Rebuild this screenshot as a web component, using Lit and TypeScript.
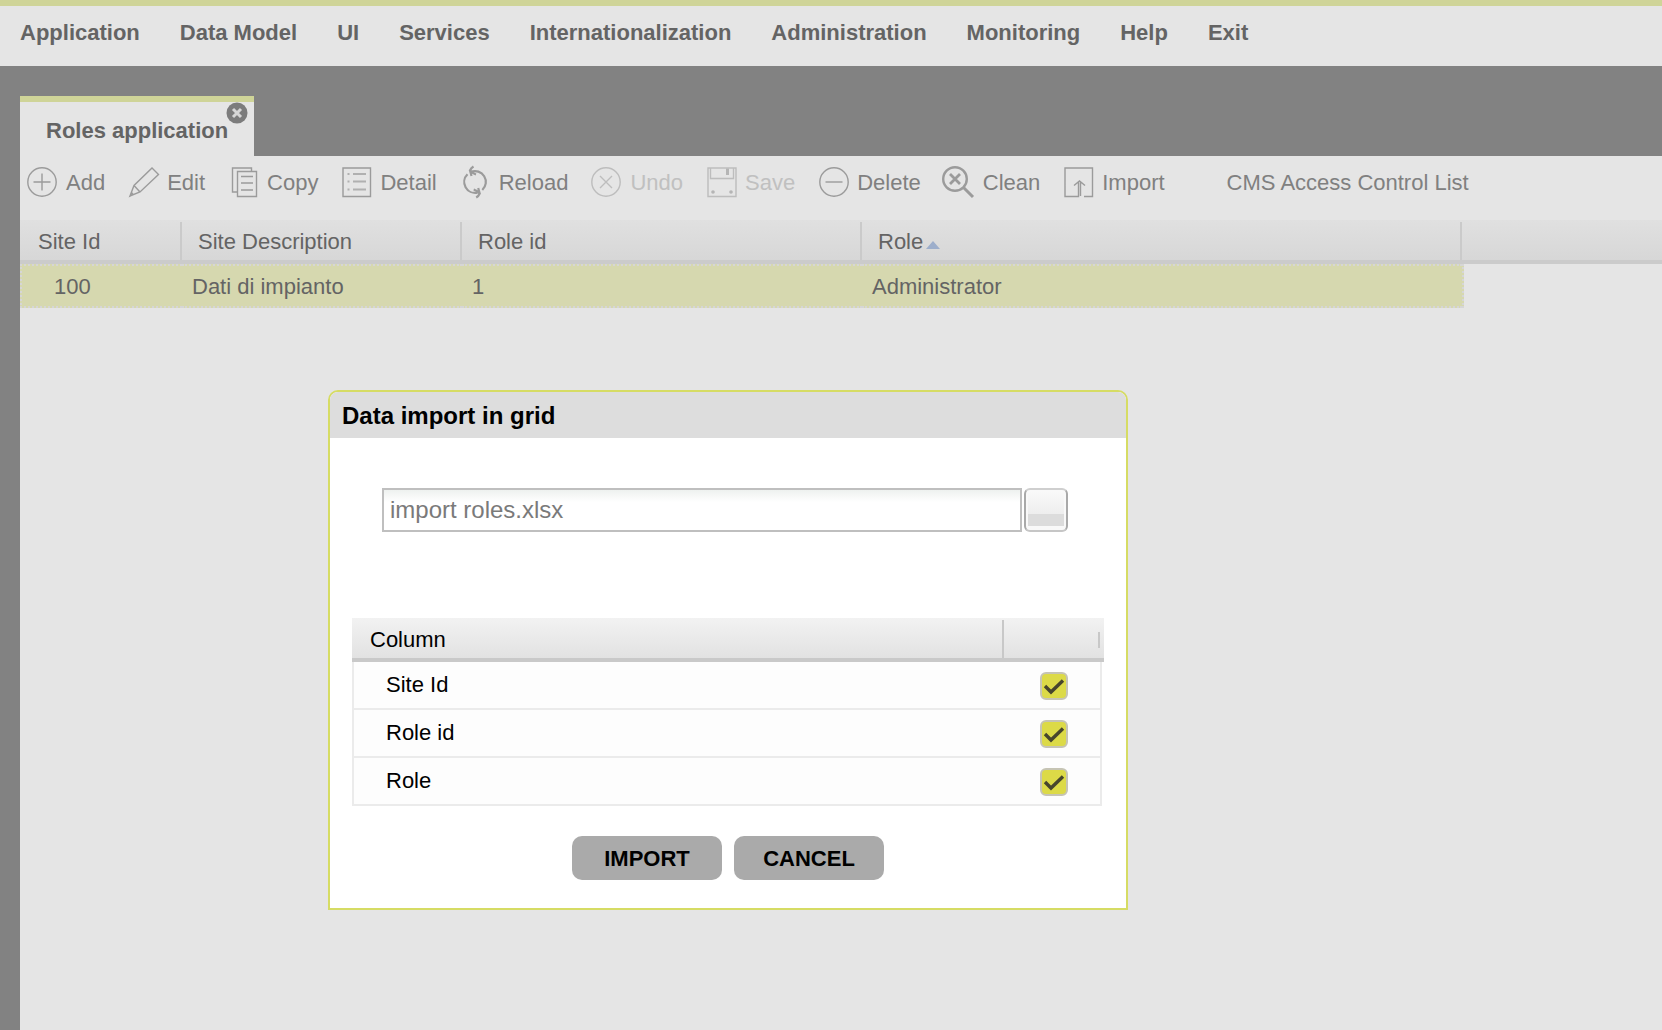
import { LitElement, html, css, svg, nothing } from "lit";
import { customElement, property } from "lit/decorators.js";

const icons: Record<string, unknown> = {
  Add: svg`<circle cx="15" cy="16" r="14.2"/><path d="M15 7.5v17M6.5 16h17"/>`,
  Edit: svg`<path d="M2 30l4-10.5L24 2l6.5 6.5L12 26zM6 19.5l6 6.5M2 30l3-1.5-1.5-2z"/>`,
  Copy: svg`<path d="M9.500 26H4.500V2H23.500v3.500M9.500 5.500h19v25h-19z"/><path d="M13 10.500h12M13 17h12M13 24h12"/>`,
  Detail: svg`<path d="M2 2h27.500v28.500H2z"/><path stroke="#b0b0b0" stroke-width="1.800" d="M12 8h13M12 15.500h13M12 23.500h13M6.500 8h2M6.500 15.500h2M6.500 23.500h2"/>`,
  Reload: svg`<g stroke-width="2.200"><path d="M7.500 8.200A10.900 10.900 0 0 0 17.500 26.600M22.300 24A10.900 10.900 0 0 0 11 5.800"/><path d="M13.500 .5Q11 2 10 4.500Q13 7.500 16 8.500M10 4.500l1.500 5.500M16.200 31.500Q18.700 30 19.700 27.500Q16.700 24.500 13.700 23.500M19.700 27.500l-1.500-5.500"/></g>`,
  Undo: svg`<circle cx="15" cy="16" r="14.2"/><path d="M9 10l12 12M21 10L9 22"/>`,
  Save: svg`<path d="M2 2h28v28.500H2zM4.500 2v10.500h23V2"/><path class="solid" d="M20 2.500h3v6.500h-3z"/><circle class="solid" cx="7" cy="26" r="1.800"/><circle class="solid" cx="25" cy="26" r="1.800"/>`,
  Delete: svg`<circle cx="16" cy="16" r="14.2"/><path d="M7.500 16h17"/>`,
  Clean: svg`<g stroke-width="2.400"><circle cx="11" cy="13" r="11.800"/><path stroke-width="2.800" d="M6 8l10 10M16 8L6 18"/><path stroke-width="3" d="M19.500 21.500l9.500 9.500"/></g>`,
  Import: svg`<path d="M21 30.500h8.500V2H2v28.500h13.500V16M17.500 30V16M11 19.500L16.500 15l5.500 4.500"/>`,
};

@customElement("tool-button")
class ToolButton extends LitElement {
  @property() label = "";
  @property({ type: Boolean }) disabled = false;

  static styles = css`
    :host { display: block; }
    button {
      display: flex; align-items: center; gap: 7px;
      padding: 0; border: 0; background: none; cursor: pointer;
      font: 22px/26px "Liberation Sans", Arial, sans-serif; color: #808080; white-space: nowrap;
    }
    button:disabled { color: #c0c0c0; cursor: default; }
    span { padding-top: 2px; }
    svg { width: 32px; height: 32px; overflow: visible; fill: none; stroke: #9b9b9b; stroke-width: 1.4; }
    .solid { fill: #9b9b9b; stroke: none; }
    button:disabled svg { stroke: #bdbdbd; }
    button:disabled .solid { fill: #b5b5b5; }
  `;

  render() {
    return html`<button type="button" ?disabled=${this.disabled}>
      <svg viewBox="0 0 32 32" aria-hidden="true">${icons[this.label] ?? nothing}</svg><span>${this.label}</span>
    </button>`;
  }
}

@customElement("import-dialog")
class ImportDialog extends LitElement {
  @property({ attribute: false }) columns = ["Site Id", "Role id", "Role"];

  static styles = css`
    :host { display: block; }
    * { box-sizing: border-box; }
    .dialog {
      border: 2px solid #d6dc64; border-radius: 10px 10px 0 0; background: #fff; color: #000;
      overflow: hidden; font: 22px/26px "Liberation Sans", Arial, sans-serif;
    }
    h2 { margin: 0; padding: 11px 12px 9px; background: #ddd; font-size: 24px; line-height: 26px; }
    .body { padding: 50px 22px 28px; }
    .file { display: flex; gap: 2px; margin: 0 36px 86px 30px; }
    .path {
      flex: 1; min-width: 0; height: 44px; padding: 0 6px; border: 2px solid #bfbfbf; border-radius: 0;
      background: linear-gradient(#eef1ef, #fff 12px); color: #7a7a7a;
      font: 24px "Liberation Sans", Arial, sans-serif; outline: 0;
    }
    .browse {
      width: 44px; height: 44px; padding: 0; border: 2px solid; border-color: #cfcfcf #a9a9a9 #c6c6c6;
      border-radius: 6px; box-shadow: inset 0 0 0 2px #f9f9f9;
      background: linear-gradient(#fafafa, #eee 24px, #dcdcdc 24px, #dcdcdc 36px, #f9f9f9 36px);
    }
    table { width: 100%; border-spacing: 0; border-collapse: separate; table-layout: fixed; }
    .flag { width: 100px; }
    .head { height: 44px; padding: 4px 0 0; text-align: left; font-weight: 400; border-bottom: 4px solid #c9c9c9; }
    .head {
      background: linear-gradient(#c8c8c8, #c8c8c8) right bottom / 2px 38px no-repeat,
        linear-gradient(#f2f2f2, #e2e2e2);
    }
    .head span { display: block; padding-left: 18px; }
    .head.last {
      background: linear-gradient(#c8c8c8, #c8c8c8) right 4px top 14px / 2px 16px no-repeat,
        linear-gradient(#f2f2f2, #e2e2e2);
    }
    .rows { margin-right: 2px; }
    .row {
      display: flex; align-items: center; justify-content: space-between;
      height: 48px; padding: 2px 32px 0; border: 2px solid #ebebeb; border-top: 0; background: #fdfdfd;
    }
    .row label { flex: 1; padding-bottom: 2px; }
    .check { display: grid; width: 28px; height: 28px; }
    .check > * { grid-area: 1 / 1; }
    .check input {
      appearance: none; width: 28px; height: 28px; margin: 0; background: #dcda47;
      border: 2px solid #c6c4b4; border-radius: 6px;
    }
    .check svg { width: 28px; height: 28px; fill: none; stroke: #47452d; stroke-width: 3.4; pointer-events: none; visibility: hidden; }
    .check input:checked + svg { visibility: visible; }
    .actions { display: flex; justify-content: center; gap: 12px; margin-top: 30px; }
    .action {
      width: 150px; height: 44px; padding: 2px 0 0; border: 0; border-radius: 10px; background: #aaa; color: #000;
      font: 700 22px "Liberation Sans", Arial, sans-serif;
    }
  `;

  render() {
    return html`<section class="dialog" role="dialog" aria-labelledby="title">
      <h2 id="title">Data import in grid</h2>
      <div class="body">
        <div class="file">
          <input class="path" type="text" aria-label="File" .value=${"import roles.xlsx"} />
          <button class="browse" type="button" aria-label="Browse"></button>
        </div>
        <table>
          <colgroup><col /><col class="flag" /></colgroup>
          <thead><tr><th class="head"><span>Column</span></th><th class="head last"></th></tr></thead>
        </table>
        <div class="rows">
          ${this.columns.map(
            (name, i) => html`<div class="row">
              <label for="col-${i}">${name}</label>
              <span class="check">
                <input id="col-${i}" type="checkbox" checked />
                <svg viewBox="0 0 28 28" aria-hidden="true"><path d="M5 14l6 6L23 8.500" /></svg>
              </span>
            </div>`
          )}
        </div>
        <div class="actions">
          <button class="action" type="button">IMPORT</button>
          <button class="action" type="button">CANCEL</button>
        </div>
      </div>
    </section>`;
  }
}

@customElement("app-root")
class AppRoot extends LitElement {
  private menu = ["Application", "Data Model", "UI", "Services", "Internationalization", "Administration", "Monitoring", "Help", "Exit"];
  private tools = ["Add", "Edit", "Copy", "Detail", "Reload", "Undo", "Save", "Delete", "Clean", "Import", "CMS Access Control List"];
  private disabledTools = new Set(["Undo", "Save"]);

  static styles = css`
    :host {
      display: flex; flex-direction: column; position: relative; min-height: 100vh; overflow: hidden;
      background: #828282; color: #646464; font: 22px/26px "Liberation Sans", Arial, sans-serif;
    }
    * { box-sizing: border-box; }
    .menu {
      display: flex; gap: 40px; height: 66px; padding: 14px 20px 0; border-top: 6px solid #cfd498; background: #e5e5e5;
    }
    .menu a { color: inherit; font-weight: 700; text-decoration: none; white-space: nowrap; }
    .tabs { display: flex; padding: 30px 20px 0; }
    .tab {
      display: flex; position: relative; height: 60px; padding: 0 26px; align-items: center;
      border-top: 6px solid #cfd498; background: #e5e5e5; font-weight: 700;
    }
    .tab span { padding-top: 4px; }
    .close { position: absolute; top: 0; right: 6px; width: 22px; height: 22px; padding: 0; border: 0; background: none; }
    .close svg { display: block; width: 22px; height: 22px; }
    .panel { flex: 1; margin-left: 20px; background: #e5e5e5; }
    .tools { display: flex; gap: 23px; height: 64px; padding: 10px 7px 0; }
    .grid { width: 100%; table-layout: fixed; border-spacing: 0; }
    .c1 { width: 162px; }
    .c2 { width: 280px; }
    .c3 { width: 400px; }
    .c4 { width: 600px; }
    th {
      height: 44px; padding: 4px 0 0 16px; border-bottom: 4px solid #cbcbcb; font-weight: 400; text-align: left;
      background: linear-gradient(#cacaca, #cacaca) right bottom / 2px 38px no-repeat, linear-gradient(#e0e0e0, #d7d7d7);
    }
    th:first-child { padding-left: 18px; }
    th:last-child { background: linear-gradient(#e0e0e0, #d7d7d7); }
    .sort { width: 14px; height: 8px; margin-left: 3px; fill: #9daecb; }
    td { height: 44px; padding: 2px 0 0 10px; border: 2px dotted #d6d6d6; border-width: 2px 0; background: #d6d8af; }
    td:first-child { padding-left: 32px; border-left-width: 2px; }
    td:last-child {
      padding: 0; border-width: 0 0 0 2px; background: linear-gradient(#d6d8af, #d6d8af) left top / 2px 100% no-repeat;
      background-origin: border-box;
    }
    .modal { position: absolute; left: 328px; top: 390px; width: 800px; }
  `;

  render() {
    return html`
      <nav class="menu">${this.menu.map((m) => html`<a href="#">${m}</a>`)}</nav>
      <div class="tabs">
        <div class="tab">
          <span>Roles application</span>
          <button class="close" type="button" aria-label="Close tab">
            <svg viewBox="0 0 22 22" aria-hidden="true">
              <circle cx="11" cy="11" r="10.500" fill="#7c7c7c" />
              <path d="M7 7l8 8M15 7l-8 8" stroke="#d6d6d6" stroke-width="3" />
            </svg>
          </button>
        </div>
      </div>
      <main class="panel">
        <div class="tools">
          ${this.tools.map((t) => html`<tool-button label=${t} ?disabled=${this.disabledTools.has(t)}></tool-button>`)}
        </div>
        <table class="grid">
          <colgroup><col class="c1" /><col class="c2" /><col class="c3" /><col class="c4" /><col /></colgroup>
          <thead>
            <tr>
              <th>Site Id</th><th>Site Description</th><th>Role id</th>
              <th>Role<svg class="sort" viewBox="0 0 14 8" aria-hidden="true"><path d="M7 0l7 8H0z" /></svg></th>
              <th></th>
            </tr>
          </thead>
          <tbody>
            <tr><td>100</td><td>Dati di impianto</td><td>1</td><td>Administrator</td><td></td></tr>
          </tbody>
        </table>
      </main>
      <import-dialog class="modal"></import-dialog>
    `;
  }
}
